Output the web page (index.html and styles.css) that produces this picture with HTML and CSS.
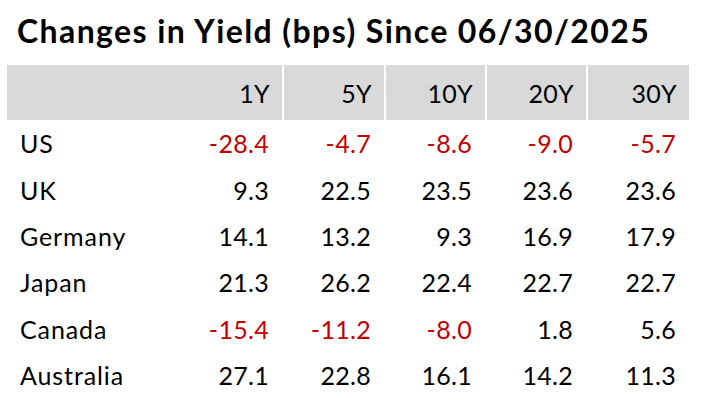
FILE: index.html
```html
<!DOCTYPE html>
<html>
<head>
<meta charset="utf-8">
<link rel="stylesheet" href="styles.css">
</head>
<body>
<div class="card">
  <h1 class="title">Changes in Yield (bps) Since 06/30/2025</h1>
  <div class="table">
    <div class="hcell first"></div>
    <div class="hcell second">1Y</div>
    <div class="hcell">5Y</div>
    <div class="hcell">10Y</div>
    <div class="hcell">20Y</div>
    <div class="hcell">30Y</div>

    <div class="cell label">US</div>
    <div class="cell neg">-28.4</div>
    <div class="cell neg">-4.7</div>
    <div class="cell neg">-8.6</div>
    <div class="cell neg">-9.0</div>
    <div class="cell neg">-5.7</div>

    <div class="cell label">UK</div>
    <div class="cell">9.3</div>
    <div class="cell">22.5</div>
    <div class="cell">23.5</div>
    <div class="cell">23.6</div>
    <div class="cell">23.6</div>

    <div class="cell label">Germany</div>
    <div class="cell">14.1</div>
    <div class="cell">13.2</div>
    <div class="cell">9.3</div>
    <div class="cell">16.9</div>
    <div class="cell">17.9</div>

    <div class="cell label">Japan</div>
    <div class="cell">21.3</div>
    <div class="cell">26.2</div>
    <div class="cell">22.4</div>
    <div class="cell">22.7</div>
    <div class="cell">22.7</div>

    <div class="cell label">Canada</div>
    <div class="cell neg">-15.4</div>
    <div class="cell neg">-11.2</div>
    <div class="cell neg">-8.0</div>
    <div class="cell">1.8</div>
    <div class="cell">5.6</div>

    <div class="cell label">Australia</div>
    <div class="cell">27.1</div>
    <div class="cell">22.8</div>
    <div class="cell">16.1</div>
    <div class="cell">14.2</div>
    <div class="cell">11.3</div>
  </div>
</div>
</body>
</html>
```

FILE: styles.css
```css
html, body {
  margin: 0;
  padding: 0;
  background: #ffffff;
}
.card {
  width: 708px;
  height: 413px;
  padding-left: 7px;
  box-sizing: border-box;
  font-family: "Lato", "Liberation Sans", sans-serif;
  color: #000000;
}
.title {
  margin: 0;
  height: 65px;
  box-sizing: border-box;
  padding: 13px 0 0 10px;
  font-size: 32px;
  font-weight: 700;
  line-height: 36px;
  letter-spacing: 1.4px;
}
.table {
  display: grid;
  grid-template-columns: 173px 102px 102px 101px 101px 103px;
  grid-auto-rows: 46.4px;
  grid-template-rows: 55px;
  width: 682px;
}
.hcell {
  background: #d9d9d9;
  border-left: 2px solid #ffffff;
  display: flex;
  align-items: center;
  justify-content: flex-end;
  padding-right: 12px;
  font-size: 25px;
  font-weight: 400;
  letter-spacing: 0.3px;
}
.hcell.first,
.hcell.second {
  border-left: none;
}
.cell {
  display: flex;
  align-items: center;
  justify-content: flex-end;
  padding-right: 13px;
  font-size: 25px;
  letter-spacing: 0.3px;
}
.cell.label {
  justify-content: flex-start;
  padding-left: 13px;
  padding-right: 0;
  letter-spacing: 0.9px;
}
.neg {
  color: #c00000;
}
```
